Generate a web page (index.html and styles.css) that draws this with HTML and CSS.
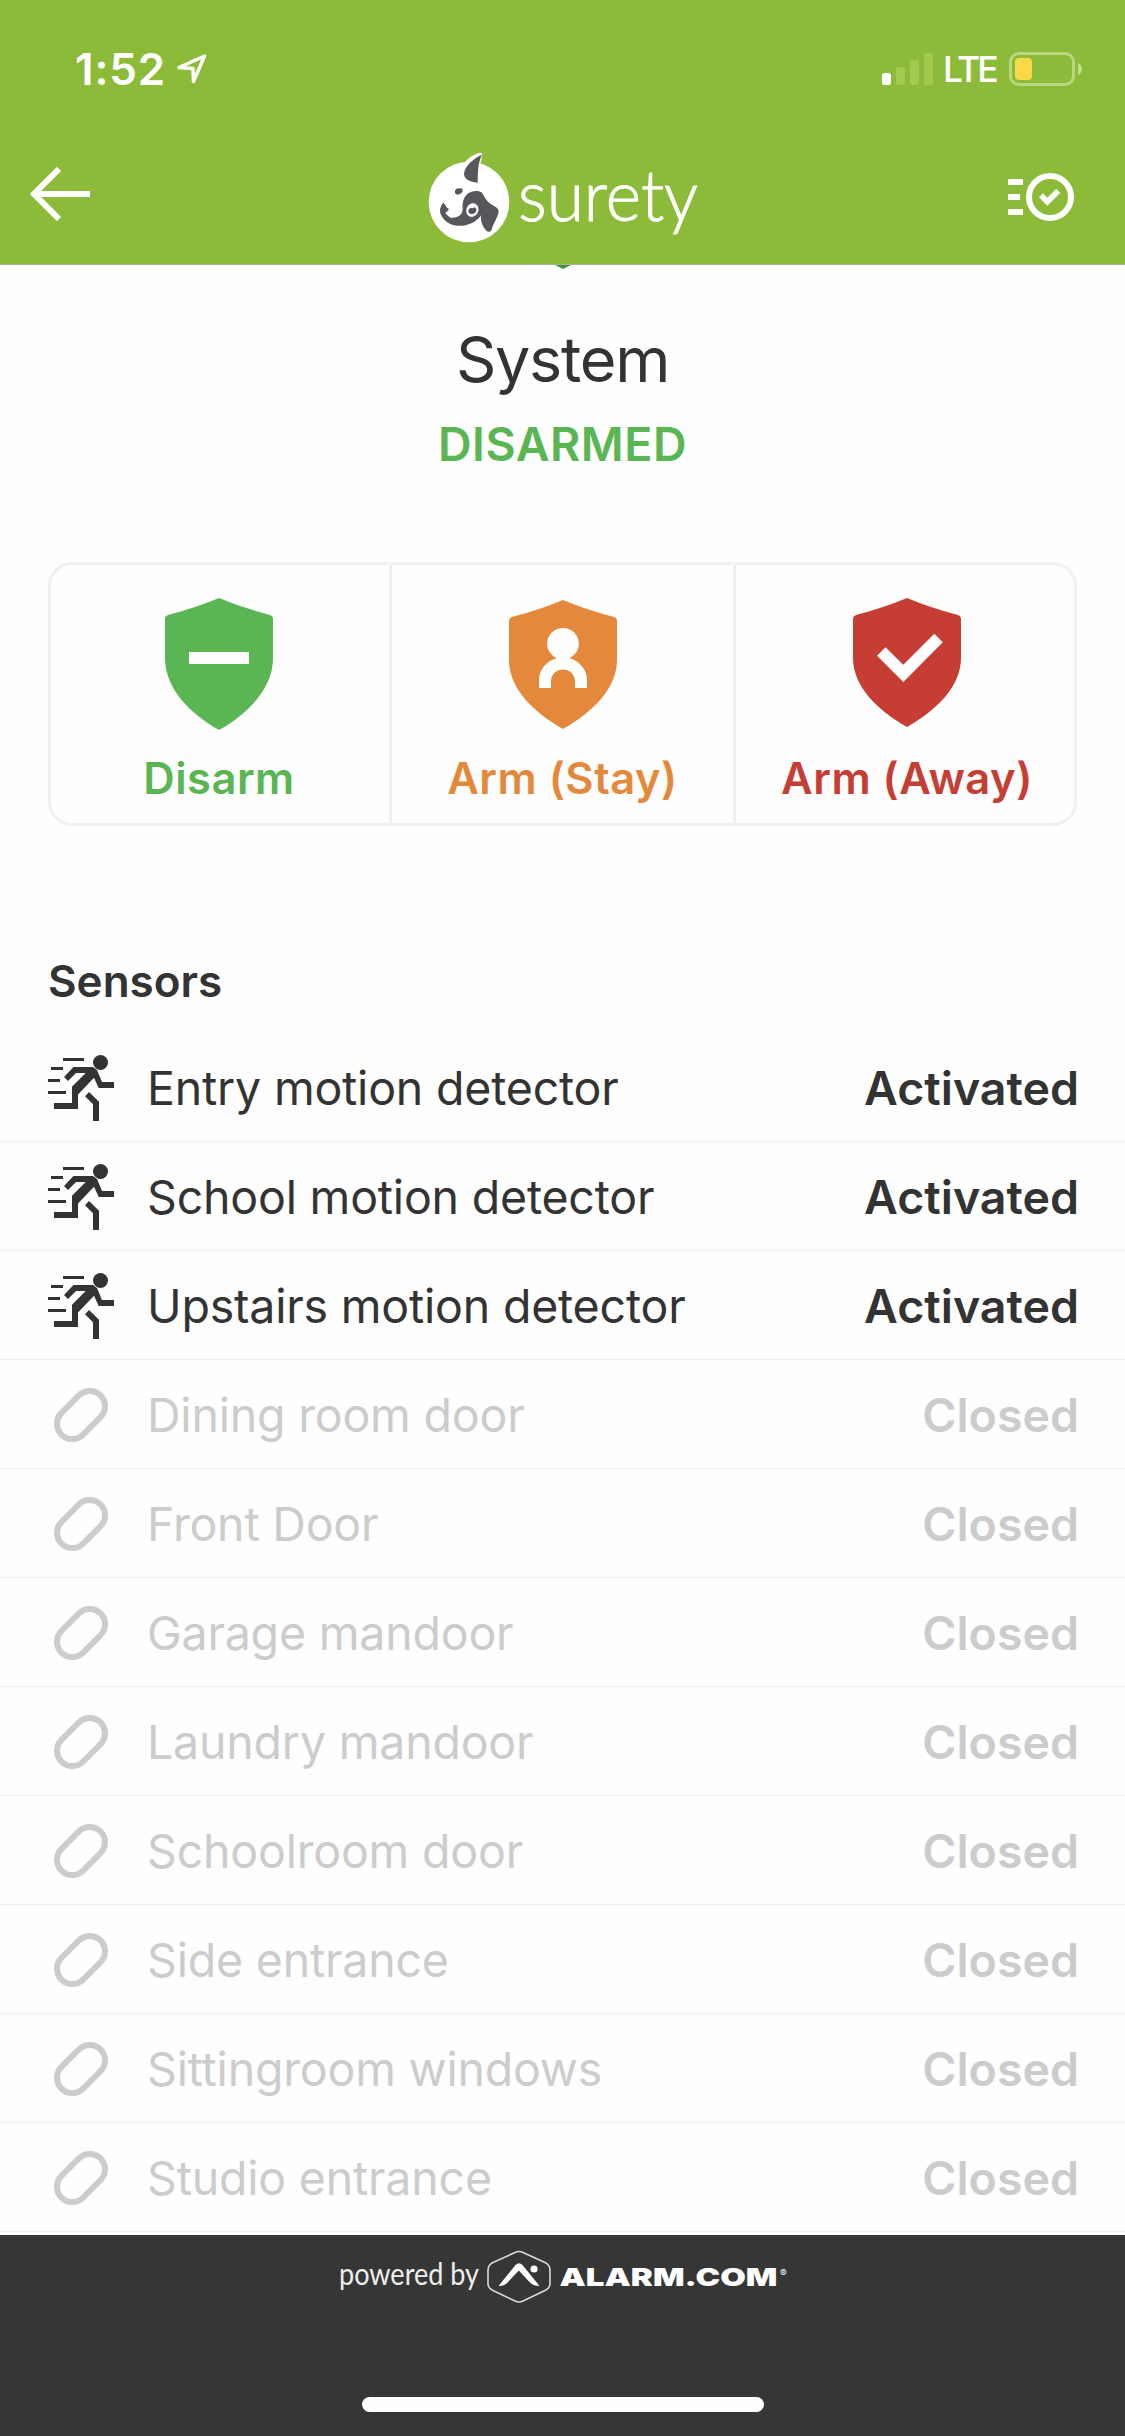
FILE: index.html
```html
<!DOCTYPE html>
<html lang="en">
<head>
    <meta charset="UTF-8">
    <meta name="viewport" content="width=device-width, initial-scale=1.0">
    <title>System</title>
    <link rel="stylesheet" href="styles.css">
</head>
<body>
    <!-- Shared icons -->
    <svg class="sprite" width="0" height="0">
        <symbol id="motion" viewBox="0 0 66 66">
            <circle cx="52.5" cy="7.5" r="7.5"/>
            <path d="M15 3h21v3H15zM3 12h12v3H3zM0 24h12v3H0zM0 36h18v3H0z"/>
            <path d="M16 22L25.5 12H45L49 15L54 27H66V33H50.7L46 22.7L30 39.5V54H6V48H24V31.7L37.7 18H28L20 26z"/>
            <path d="M41 37L51 46.7V66H45V49.3L37 41.3z"/>
        </symbol>
        <symbol id="contact" viewBox="0 0 66 66">
            <rect x="5.4" y="17.7" width="55.2" height="30.6" rx="15.3" transform="rotate(-45 33 33)" fill="none" stroke="currentColor" stroke-width="6"/>
        </symbol>
    </svg>

    <header class="header">
        <div class="status-bar">
            <span class="time">1:52</span>
            <svg class="location" width="32" height="32" viewBox="0 0 32 32">
                <path d="M3 14.5L28.5 3L17.5 28.5L17 15.5z" fill="none" stroke="#fff" stroke-width="3.5" stroke-linejoin="round"/>
            </svg>
            <svg class="signal" width="51" height="32" viewBox="0 0 51 32">
                <rect x="0" y="20" width="9" height="12" rx="2.5" fill="#fff"/>
                <rect x="14" y="14" width="9" height="18" rx="2.5" fill="#a3c951"/>
                <rect x="28" y="7" width="9" height="25" rx="2.5" fill="#a3c951"/>
                <rect x="42" y="0" width="9" height="32" rx="2.5" fill="#a3c951"/>
            </svg>
            <span class="network">LTE</span>
            <svg class="battery" width="73" height="34" viewBox="0 0 73 34">
                <rect x="1.5" y="1.5" width="63" height="31" rx="8.5" fill="none" stroke="#bbd580" stroke-width="3"/>
                <rect x="6" y="6" width="17" height="22" rx="4" fill="#f9d84a"/>
                <path d="M69 11c5.300 2 5.300 10 0 12z" fill="#c4db92"/>
            </svg>
        </div>
        <div class="nav-bar">
            <svg class="back" width="60" height="54" viewBox="0 0 60 54">
                <path d="M60 27H6M29 2L4 27L29 52" fill="none" stroke="#fff" stroke-width="6"/>
            </svg>
            <div class="brand">
                <svg class="brand-mark" width="84" height="92" viewBox="0 0 252 276">
                    <circle cx="126" cy="150" r="121" fill="#fff"/>
                    <path d="M110 34C124 18 140 6 160 2C168 3 166 10 164 18L156 60z" fill="#fff"/>
                    <path d="M165 8C144 17 112 40 111 67C112 82 128 90 152 92C153 60 152 34 165 8z" fill="#55575b"/>
                    <path d="M84 118C85 110 93 107 99 110L104 108L107 114C108 121 100 127 92 128C86 128 83 124 84 118z" fill="#55575b"/>
                    <path d="M49 152C42 160 35 174 42 188C54 215 82 224 109 221C135 217 153 204 162 190C160 208 167 225 179 237C184 241 190 240 194 233C198 215 211 200 215 180C216 169 204 164 192 157C180 149 172 135 165 122C157 115 137 115 125 123C111 132 105 151 107 171C107 188 93 199 72 197C65 196 60 188 55 184C57 178 66 178 65 170C58 168 56 157 49 152z" fill="#55575b"/>
                    <ellipse cx="136" cy="174" rx="18" ry="21" transform="rotate(25 136 174)" fill="#fff"/>
                    <path d="M124 176C125 169 132 166 137 169L142 166L148 170C150 180 142 186 133 186C127 185 124 182 124 176z" fill="#55575b"/>
                </svg>
                <svg class="brand-name" width="184" height="80" viewBox="0 0 184 80">
                    <text x="0" y="58" textLength="180" lengthAdjust="spacingAndGlyphs">surety</text>
                </svg>
            </div>
            <svg class="activity" width="66" height="48" viewBox="0 0 66 48">
                <path d="M0 6h15v6H0zM0 21h12v6H0zM0 36h15v6H0z" fill="#fff"/>
                <circle cx="42" cy="24" r="21" fill="none" stroke="#fff" stroke-width="6"/>
                <path d="M31 24.300l4-4 4.300 4.400 9-9 4 4-13 13z" fill="#fff"/>
            </svg>
        </div>
    </header>

    <main class="content">
        <svg class="shield-tip" width="16" height="4" viewBox="0 0 16 4">
            <path d="M0 0H16L8 4z" fill="#419542"/>
        </svg>
        <h1 class="title">System</h1>
        <p class="state">DISARMED</p>

        <div class="actions">
            <div class="action disarm">
                <svg class="shield" width="108" height="132" viewBox="0 0 108 132">
                    <path d="M54 0Q78 10 105 17Q108 18 108 21V60C108 90 84 115 54 132C24 115 0 90 0 60V21Q0 18 3 17Q30 10 54 0z" fill="currentColor"/>
                    <path d="M24 54h60v12H24z" fill="#fefefe"/>
                </svg>
                <span>Disarm</span>
            </div>
            <div class="action stay">
                <svg class="shield" width="108" height="132" viewBox="0 0 108 132">
                    <path d="M54 2Q78 12 105 19Q108 20 108 23V62C108 90 84 114 54 131C24 114 0 90 0 62V23Q0 20 3 19Q30 12 54 2z" fill="currentColor"/>
                    <circle cx="54" cy="45.700" r="15.800" fill="#fefefe"/>
                    <path d="M48 60L46 57H62L60 60C71 63 78 72 78 82V90H66V83.500C66 67.500 42 67.500 42 83.500V90H30V82C30 72 37 63 48 60z" fill="#fefefe"/>
                </svg>
                <span>Arm (Stay)</span>
            </div>
            <div class="action away">
                <svg class="shield" width="108" height="132" viewBox="0 0 108 132">
                    <path d="M54 0Q78 10 105 17Q108 18 108 21V60C108 88 84 112 54 129C24 112 0 88 0 60V21Q0 18 3 17Q30 10 54 0z" fill="currentColor"/>
                    <path d="M24 57.700l8.500-8.500 17.800 17.600 31-31 8.500 8.500-39.500 39.700z" fill="#fefefe"/>
                </svg>
                <span>Arm (Away)</span>
            </div>
        </div>

        <h2 class="section-title">Sensors</h2>
        <ul class="sensors">
            <li class="sensor active"><svg class="icon"><use href="#motion"/></svg><span class="name">Entry motion detector</span><span class="value">Activated</span></li>
            <li class="sensor active"><svg class="icon"><use href="#motion"/></svg><span class="name">School motion detector</span><span class="value">Activated</span></li>
            <li class="sensor active"><svg class="icon"><use href="#motion"/></svg><span class="name">Upstairs motion detector</span><span class="value">Activated</span></li>
            <li class="sensor"><svg class="icon"><use href="#contact"/></svg><span class="name">Dining room door</span><span class="value">Closed</span></li>
            <li class="sensor"><svg class="icon"><use href="#contact"/></svg><span class="name">Front Door</span><span class="value">Closed</span></li>
            <li class="sensor"><svg class="icon"><use href="#contact"/></svg><span class="name">Garage mandoor</span><span class="value">Closed</span></li>
            <li class="sensor"><svg class="icon"><use href="#contact"/></svg><span class="name">Laundry mandoor</span><span class="value">Closed</span></li>
            <li class="sensor"><svg class="icon"><use href="#contact"/></svg><span class="name">Schoolroom door</span><span class="value">Closed</span></li>
            <li class="sensor"><svg class="icon"><use href="#contact"/></svg><span class="name">Side entrance</span><span class="value">Closed</span></li>
            <li class="sensor"><svg class="icon"><use href="#contact"/></svg><span class="name">Sittingroom windows</span><span class="value">Closed</span></li>
            <li class="sensor"><svg class="icon"><use href="#contact"/></svg><span class="name">Studio entrance</span><span class="value">Closed</span></li>
        </ul>
    </main>

    <footer class="footer">
        <svg class="powered" width="450" height="56" viewBox="0 0 450 56">
            <text class="powered-by" x="0" y="36" textLength="140" lengthAdjust="spacingAndGlyphs">powered by</text>
            <path d="M176 3.500Q180 1.500 184 3.500L206 13.500Q211 16 211 21V35Q211 39 206 41.500L184 52Q180 54 176 52L154 41.500Q149 39 149 35V21Q149 16 154 13.500z" fill="none" stroke="#d8d8d8" stroke-width="1.600"/>
            <path d="M159.500 37L176.500 16Q180 12.500 183.500 16L200.500 37Q194 37 190 32.500L179.800 21.500L169.500 32.500Q166 37 159.500 37z" fill="#fff"/>
            <circle cx="195" cy="20" r="3.600" fill="#fff"/>
            <text class="alarm" x="220.500" y="37" textLength="218" lengthAdjust="spacingAndGlyphs">ALARM.COM</text>
            <text class="reg" x="441" y="28">®</text>
        </svg>
        <div class="home-indicator"></div>
    </footer>
</body>
</html>
```
FILE: styles.css
```css
* {
    box-sizing: border-box;
}
body {
    margin: 0;
    width: 1125px;
    height: 2436px;
    overflow: hidden;
    display: flex;
    flex-direction: column;
    font-family: Inter, "Liberation Sans", sans-serif;
    background-color: #fefefe;
    color: #333;
}
svg {
    display: block;
    flex: none;
}
.sprite {
    position: absolute;
}

/* Header */
.header {
    height: 265px;
    flex: none;
    background-color: #8cbb3a;
    border-bottom: 1px solid #aab391;
    color: #fff;
}
.status-bar {
    height: 138px;
    padding: 0 43px 0 75px;
    display: flex;
    align-items: center;
}
.time {
    width: 101px;
    font-size: 44px;
    font-weight: 600;
    line-height: 54px;
    letter-spacing: 0.8px;
}
.signal {
    margin-left: auto;
}
.network {
    width: 76px;
    padding: 2px 0 0 10px;
    font-size: 35.5px;
    font-weight: 500;
    line-height: 44px;
    letter-spacing: -2.8px;
}
.nav-bar {
    height: 126px;
    padding: 12px 51px 0 30px;
    display: flex;
    justify-content: space-between;
}
.back {
    margin-top: 17px;
}
.brand {
    display: flex;
    margin-left: 30px;
}
.brand-mark {
    margin-top: 2px;
}
.brand-name {
    margin-left: 7px;
    margin-top: 13px;
    overflow: visible;
}
.brand-name text {
    font-family: Lato, sans-serif;
    font-size: 71px;
    font-weight: 300;
    fill: #fff;
    stroke: #fff;
    stroke-width: 1px;
}
.activity {
    margin-top: 23px;
}

/* System */
.content {
    height: 1970px;
    flex: none;
}
.shield-tip {
    margin: 0 auto;
}
.title {
    margin: 54px 0 0;
    font-size: 63px;
    font-weight: 400;
    line-height: 72px;
    letter-spacing: -1.3px;
    text-align: center;
}
.state {
    margin: 22px 0 0;
    font-size: 46.5px;
    font-weight: 600;
    line-height: 54px;
    letter-spacing: 0.5px;
    text-align: center;
    color: #5ab553;
}
.actions {
    display: grid;
    grid-template-columns: 341px 344px 338px;
    width: 1029px;
    height: 264px;
    margin: 91px 0 0 48px;
    border: 3px solid #f0f0f0;
    border-radius: 24px;
}
.action {
    display: flex;
    flex-direction: column;
    align-items: center;
    padding-top: 33px;
    border-right: 3px solid #f0f0f0;
    font-size: 43.5px;
    font-weight: 600;
    line-height: 52px;
    letter-spacing: 0.5px;
}
.action:first-child {
    padding-right: 2px;
}
.action:last-child {
    border-right: none;
    padding-left: 4px;
}
.action span {
    margin-top: 22px;
}
.disarm {
    color: #5ab553;
}
.stay {
    color: #e4893c;
}
.away {
    color: #c63d33;
}

/* Sensors */
.section-title {
    margin: 128px 0 0 48px;
    font-size: 44px;
    font-weight: 600;
    line-height: 54px;
}
.sensors {
    margin: 25px 0 0;
    padding: 0;
    list-style: none;
}
.sensor {
    display: flex;
    align-items: center;
    height: 109px;
    padding: 2px 46px 0 48px;
    border-bottom: 1px solid #eee;
    font-size: 46.5px;
    color: #ccc;
}
.sensor.active {
    color: #333;
}
.icon {
    width: 66px;
    height: 66px;
    fill: currentColor;
}
.name {
    margin-left: 33px;
    letter-spacing: -0.2px;
}
.value {
    margin-left: auto;
    font-weight: 600;
}

/* Footer */
.footer {
    flex: 1;
    display: flex;
    flex-direction: column;
    justify-content: space-between;
    align-items: center;
    padding: 14px 0 24px;
    background-color: #363636;
}
.powered {
    margin-left: 3px;
}
.powered text {
    fill: #fff;
}
.powered .powered-by {
    font-family: Lato, sans-serif;
    font-size: 30px;
    fill: #eee;
}
.powered .alarm {
    font-size: 25px;
    font-weight: 900;
}
.powered .reg {
    font-size: 10px;
}
.home-indicator {
    width: 402px;
    height: 15px;
    border-radius: 8px;
    background-color: #fefefe;
}
```
